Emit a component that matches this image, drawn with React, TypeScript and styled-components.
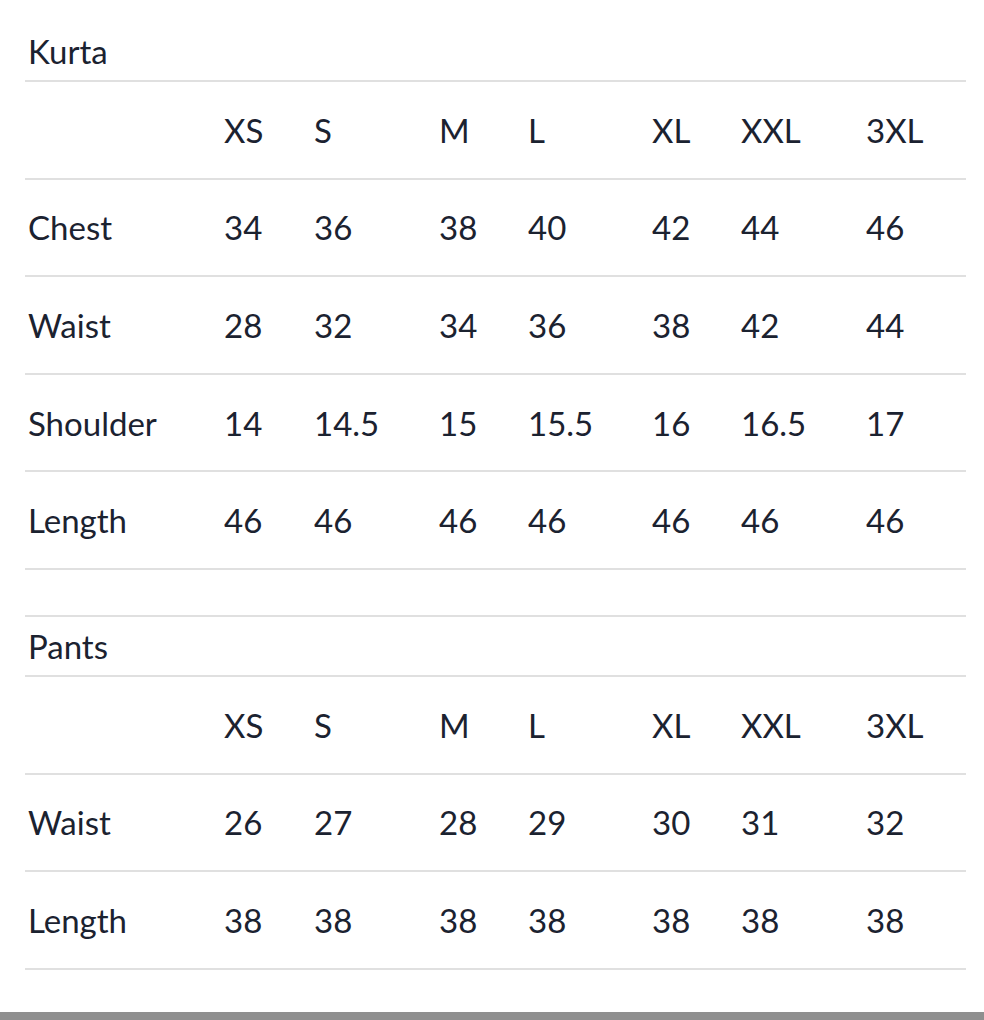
import React from "react";
import styled, { createGlobalStyle } from "styled-components";

const GlobalStyle = createGlobalStyle`
  html, body {
    margin: 0;
    padding: 0;
    background: #ffffff;
  }
  body {
    font-family: Lato, "Open Sans", sans-serif;
    color: #1b2230;
  }
`;

const SIZES = ["XS", "S", "M", "L", "XL", "XXL", "3XL"];

const charts = [
  {
    title: "Kurta",
    rows: [
      { label: "Chest", values: ["34", "36", "38", "40", "42", "44", "46"] },
      { label: "Waist", values: ["28", "32", "34", "36", "38", "42", "44"] },
      { label: "Shoulder", values: ["14", "14.5", "15", "15.5", "16", "16.5", "17"] },
      { label: "Length", values: ["46", "46", "46", "46", "46", "46", "46"] },
    ],
  },
  {
    title: "Pants",
    rows: [
      { label: "Waist", values: ["26", "27", "28", "29", "30", "31", "32"] },
      { label: "Length", values: ["38", "38", "38", "38", "38", "38", "38"] },
    ],
  },
];

export default function App() {
  return (
    <>
      <GlobalStyle />
      <Page>
        <Content>
          {charts.map((chart, i) => (
            <Section key={chart.title}>
              {i > 0 && <Spacer />}
              <TitleRow>{chart.title}</TitleRow>
              <Row>
                <Cell />
                {SIZES.map((s) => (
                  <Cell key={s}>{s}</Cell>
                ))}
              </Row>
              {chart.rows.map((row) => (
                <Row key={row.label}>
                  <Cell>{row.label}</Cell>
                  {row.values.map((v, j) => (
                    <Cell key={j}>{v}</Cell>
                  ))}
                </Row>
              ))}
            </Section>
          ))}
        </Content>
        <BottomBar />
      </Page>
    </>
  );
}

const Page = styled.div`
  display: flex;
  flex-direction: column;
  width: 984px;
  height: 1020px;
  overflow: hidden;
`;

const Content = styled.div`
  flex: 1;
  padding: 22px 18px 0 25px;
`;

const Section = styled.div`
  display: flex;
  flex-direction: column;
`;

const Spacer = styled.div`
  height: 45px;
  border-bottom: 2px solid #e0e0e0;
`;

const TitleRow = styled.div`
  display: flex;
  align-items: center;
  height: 58px;
  padding-left: 3px;
  font-size: 33px;
  border-bottom: 2px solid #e0e0e0;
`;

const Row = styled.div`
  display: grid;
  grid-template-columns: 196px 90px 125px 89px 124px 89px 125px 1fr;
  height: 95.6px;
  align-items: center;
  border-bottom: 2px solid #e0e0e0;
`;

const Cell = styled.div`
  padding-left: 3px;
  font-size: 33px;
  white-space: nowrap;
`;

const BottomBar = styled.div`
  height: 8px;
  background: #8f8f8f;
`;
